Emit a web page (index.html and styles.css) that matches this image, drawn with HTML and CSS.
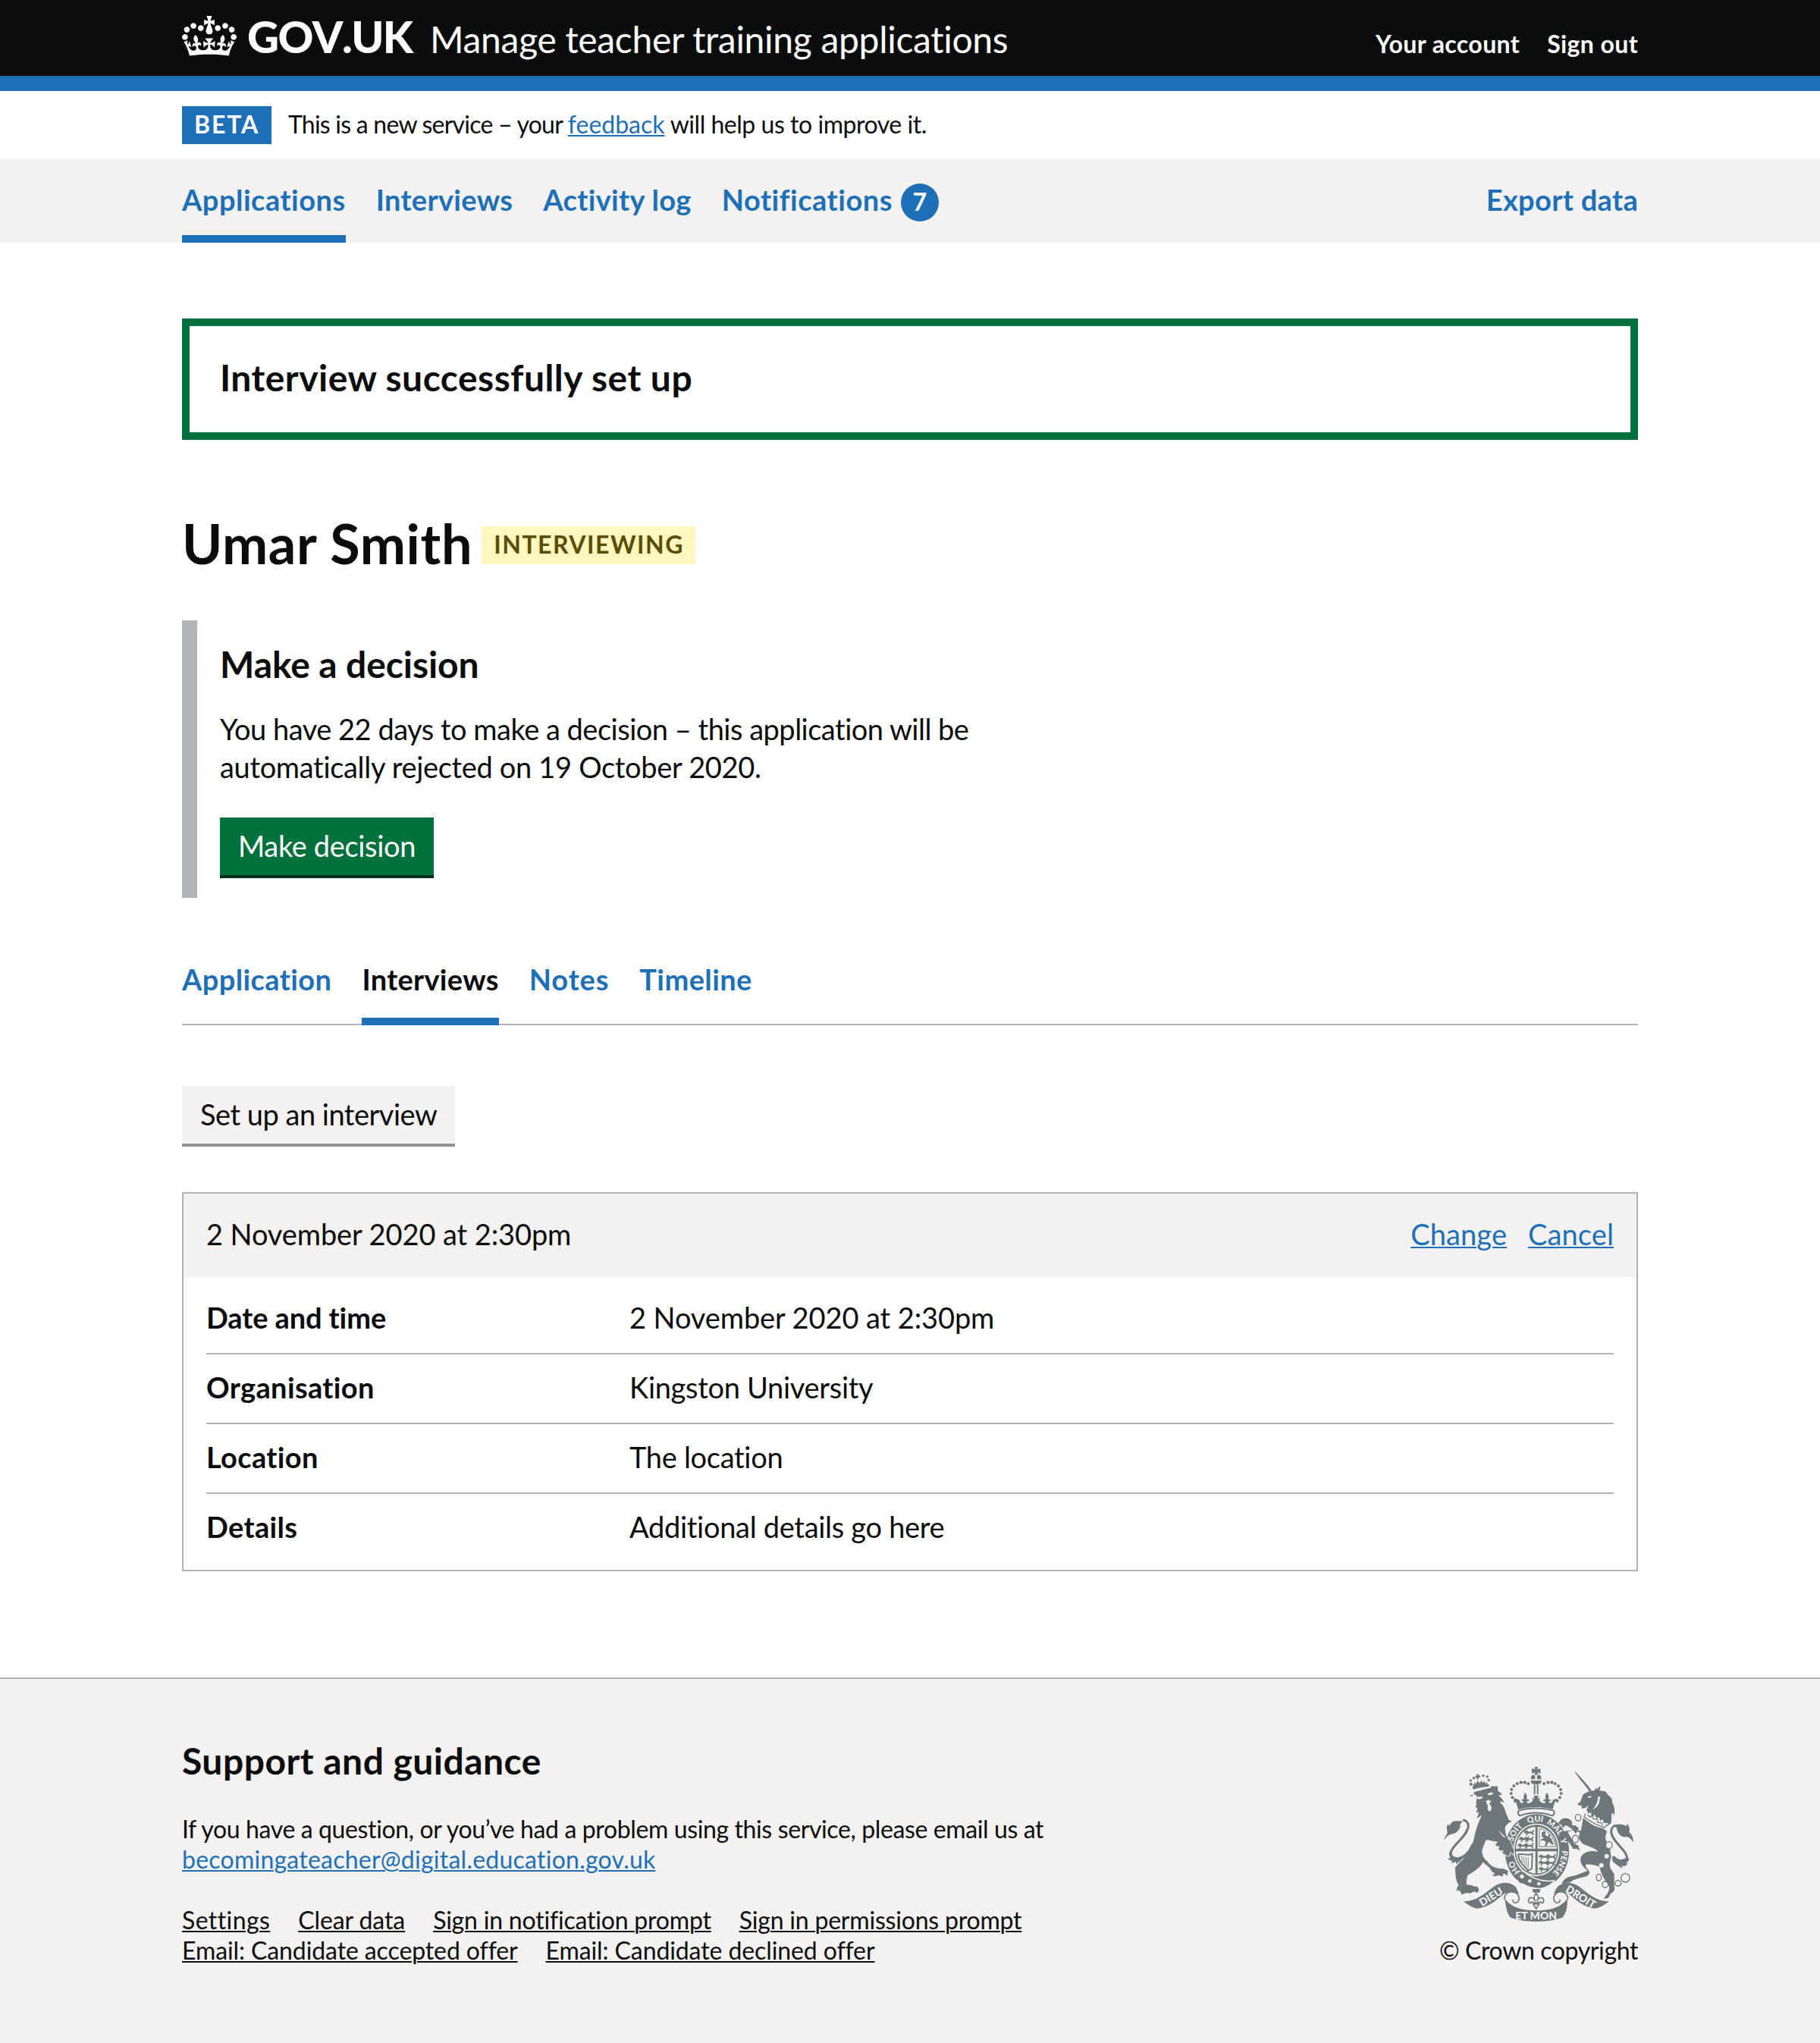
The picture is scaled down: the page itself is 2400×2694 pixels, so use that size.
FILE: index.html
```html
<!DOCTYPE html>
<html lang="en">
<head>
<meta charset="utf-8">
<title>Umar Smith – Interviews – Manage teacher training applications</title>
<link rel="stylesheet" href="styles.css">
</head>
<body>
<header class="header">
  <div class="container header-inner">
    <svg class="crown" viewBox="0 0 132 97" preserveAspectRatio="none" aria-hidden="true"><path fill="currentColor" fill-rule="evenodd" d="M25 30.2c3.5 1.5 7.7-.2 9.1-3.7 1.5-3.6-.2-7.8-3.9-9.2-3.6-1.4-7.6.3-9.1 3.9-1.4 3.5.3 7.5 3.9 9zM9 39.5c3.6 1.5 7.8-.2 9.2-3.7 1.5-3.6-.2-7.8-3.9-9.1-3.6-1.5-7.6.2-9.1 3.8-1.4 3.5.3 7.5 3.8 9zM4.4 57.2c3.5 1.5 7.7-.2 9.1-3.8 1.5-3.6-.2-7.7-3.9-9.1-3.5-1.5-7.6.3-9.1 3.8-1.4 3.5.3 7.6 3.9 9.1zm38.3-21.4c3.5 1.5 7.7-.2 9.1-3.8 1.5-3.6-.2-7.7-3.9-9.1-3.6-1.5-7.6.3-9.1 3.8-1.3 3.6.4 7.7 3.9 9.1zm64.4-5.6c-3.6 1.5-7.8-.2-9.1-3.7-1.5-3.6.2-7.8 3.8-9.2 3.6-1.4 7.7.3 9.2 3.9 1.3 3.5-.4 7.5-3.9 9zm15.9 9.3c-3.6 1.5-7.7-.2-9.1-3.7-1.5-3.6.2-7.8 3.7-9.1 3.6-1.5 7.7.2 9.2 3.8 1.5 3.5-.3 7.5-3.8 9zm4.7 17.7c-3.6 1.5-7.8-.2-9.2-3.8-1.5-3.6.2-7.7 3.9-9.1 3.6-1.5 7.7.3 9.2 3.8 1.3 3.5-.4 7.6-3.9 9.1zM89.3 35.8c-3.6 1.5-7.8-.2-9.2-3.8-1.4-3.6.2-7.7 3.9-9.1 3.6-1.5 7.7.3 9.2 3.8 1.4 3.6-.3 7.7-3.9 9.1zM69.7 17.7l8.9 4.7V9.3l-8.9 2.8c-.2-.3-.5-.6-.9-.9L72.4 0H59.6l3.5 11.2c-.3.3-.6.5-.9.9l-8.8-2.8v13.1l8.8-4.7c.3.3.6.7.9.9l-5 15.4v.1c-.2.8-.4 1.6-.4 2.4 0 4.1 3.1 7.5 7 8.1h.2c.3 0 .7.1 1 .1.4 0 .7 0 1-.1h.2c4-.6 7.1-4.1 7.1-8.1 0-.8-.1-1.7-.4-2.4V34l-5.1-15.4c.4-.2.7-.6 1-.9zM66 92.8c16.9 0 32.8 1.1 47.1 3.2 4-16.9 8.9-26.7 14-33.5l-9.6-3.4c1 4.9 1.1 7.2 0 10.2-1.5-1.4-3-4.3-4.2-8.7L108.6 76c2.8-2 5-3.2 7.5-3.3-4.4 9.4-10 11.9-13.6 11.2-4.3-.8-6.3-4.6-5.6-7.9 1-4.7 5.7-5.9 8-.5 4.3-8.7-3-11.4-7.6-8.8 7.1-7.2 7.9-13.5 2.1-21.1-8 6.1-8.1 12.3-4.5 20.8-4.7-5.4-12.1-2.5-9.5 6.2 3.4-5.2 7.9-2 7.2 3.1-.6 4.3-6.4 7.8-13.5 7.2-10.3-.9-10.9-8-11.2-13.8 2.5-.5 7.1 1.8 11 7.3L80.2 60c-4.1 4.4-8 5.3-12.3 5.4 1.4-4.4 8-11.6 8-11.6H55.5s6.4 7.2 7.9 11.6c-4.2-.1-8-1-12.3-5.4l1.4 16.4c3.9-5.5 8.5-7.7 10.9-7.3-.3 5.8-.9 12.8-11.1 13.8-7.2.6-12.9-2.9-13.5-7.2-.7-5 3.8-8.3 7.1-3.1 2.7-8.7-4.6-11.6-9.4-6.2 3.7-8.5 3.6-14.7-4.6-20.8-5.8 7.6-5 13.9 2.2 21.1-4.7-2.6-11.9.1-7.7 8.8 2.3-5.5 7.1-4.2 8.1.5.7 3.3-1.3 7.1-5.7 7.9-3.5.7-9-1.8-13.5-11.2 2.5.1 4.7 1.3 7.5 3.3l-4.7-15.4c-1.2 4.4-2.7 7.2-4.3 8.7-1.1-3-.9-5.3 0-10.2l-9.5 3.4c5 6.9 9.9 16.7 14 33.5 14.8-2.1 30.8-3.2 47.7-3.2z"/></svg>
    <a class="logotype" href="#">GOV.UK</a>
    <a class="service-name" href="#">Manage teacher training applications</a>
    <nav class="account"><a href="#">Your account</a><a href="#">Sign out</a></nav>
  </div>
</header>

<div class="container phase">
  <strong class="phase-tag">BETA</strong>
  <p class="phase-text">This is a new service – your <a class="link" href="#">feedback</a><span class="phase-rest"> will help us to improve it.</span></p>
</div>

<nav class="primary">
  <ul class="container primary-list">
    <li class="primary-item current"><a href="#">Applications</a></li>
    <li class="primary-item"><a href="#">Interviews</a></li>
    <li class="primary-item"><a href="#">Activity log</a></li>
    <li class="primary-item counted"><a href="#">Notifications</a><span class="count">7</span></li>
    <li class="primary-item end"><a href="#">Export data</a></li>
  </ul>
</nav>

<main class="container">
  <div class="notification"><h2 class="heading">Interview successfully set up</h2></div>

  <div class="title-row">
    <h1 class="title">Umar Smith</h1>
    <strong class="status-tag">INTERVIEWING</strong>
  </div>

  <section class="inset">
    <h2 class="heading decision-heading">Make a decision</h2>
    <p class="inset-text">You have 22 days to make a decision – this application will be<br><span class="inset-line">automatically rejected on 19 October 2020.</span></p>
    <a class="button decision-button" href="#">Make decision</a>
  </section>

  <ul class="subnav">
    <li class="subnav-item"><a href="#">Application</a></li>
    <li class="subnav-item current"><a href="#">Interviews</a></li>
    <li class="subnav-item notes"><a href="#">Notes</a></li>
    <li class="subnav-item"><a href="#">Timeline</a></li>
  </ul>

  <a class="button secondary" href="#">Set up an interview</a>

  <section class="card">
    <div class="card-header">
      <span class="date">2 November 2020 at 2:30pm</span>
      <span class="card-actions"><a class="link" href="#">Change</a><a class="link" href="#">Cancel</a></span>
    </div>
    <dl class="summary">
      <div class="row"><dt class="tight">Date and time</dt><dd class="date">2 November 2020 at 2:30pm</dd></div>
      <div class="row"><dt>Organisation</dt><dd>Kingston University</dd></div>
      <div class="row"><dt>Location</dt><dd>The location</dd></div>
      <div class="row"><dt>Details</dt><dd>Additional details go here</dd></div>
    </dl>
  </section>
</main>

<footer class="footer">
  <div class="container footer-inner">
    <div class="footer-main">
      <h2 class="heading">Support and guidance</h2>
      <p class="footer-text">If you have a question, or you’ve had a problem using this service, please email us at<br><a class="link email" href="#">becomingateacher@digital.education.gov.uk</a></p>
      <ul class="footer-links">
        <li class="loose"><a href="#">Settings</a></li>
        <li><a href="#">Clear data</a></li>
        <li class="tight"><a href="#">Sign in notification prompt</a></li>
        <li class="tight"><a href="#">Sign in permissions prompt</a></li>
        <li><a href="#">Email: Candidate accepted offer</a></li>
        <li><a href="#">Email: Candidate declined offer</a></li>
      </ul>
    </div>
    <div class="copyright">
      <svg class="crest" viewBox="72 60 750 612" aria-hidden="true">
        <defs>
          <path id="garter" d="M440 503C386 503 341 452 341 389C341 326 386 276 440 276C494 276 539 326 539 389C539 452 494 503 440 503Z"/>
          <g id="passant"><path d="M0 6l7-6 6 2 3 4h14l6-8 4 2-5 9 3 9-5 2-4-7H14l-3 8-6-1 4-8-5-1-4 4z"/></g>
        </defs>
        <g fill="currentColor">
          <!-- royal crown -->
          <path d="M430 60h15l-4 10 13-4v20l-13-5 4 10h-15l4-10-14 5V66l14 4z"/>
          <path d="M421 92h12v17h-16c-1-7 0-13 4-17zM441 92h12c4 5 5 10 4 17h-16zM415 114h44c0 9-8 14-14 16h-16c-6-2-14-8-14-16zM428 132h6v36h-6zM440 132h6v36h-6z"/>
          <g>
            <circle cx="353" cy="194" r="6"/><circle cx="343" cy="181" r="6"/><circle cx="338" cy="165" r="6"/><circle cx="340" cy="149" r="6"/><circle cx="349" cy="135" r="6"/><circle cx="362" cy="126" r="6"/><circle cx="377" cy="121" r="6.500"/><circle cx="392" cy="121" r="6.500"/><circle cx="406" cy="126" r="6"/>
            <circle cx="521" cy="194" r="6"/><circle cx="531" cy="181" r="6"/><circle cx="536" cy="165" r="6"/><circle cx="534" cy="149" r="6"/><circle cx="525" cy="135" r="6"/><circle cx="512" cy="126" r="6"/><circle cx="499" cy="121" r="6.500"/><circle cx="484" cy="121" r="6.500"/><circle cx="468" cy="126" r="6"/>
          </g>
          <path d="M352 184l18 6c2 7 5 12 10 13 7 0 8-6 4-9-4-2-5 2-5 2-1-8 5-11 10-7-3-12-1-19 5-27 7 8 8 15 5 27 6-4 11 0 9 8-2-3-7-3-8 2 0 5 9 6 15 2 4-2 7-6 10-8l-4-12 8 5c2-4-1-10-3-13h22c-3 3-5 9-4 13l9-5-4 12c3 2 6 6 10 8 6 4 15 3 15-2-1-5-6-5-8-2-2-8 3-12 9-8-3-12-2-19 5-27 6 8 8 15 5 27 5-4 11-1 10 7 0 0-1-4-5-2-4 3-3 9 4 9 5-1 8-6 10-13l18-6c-10 12-15 25-20 44-43-12-93-12-136 0-5-19-10-32-19-44z"/>
          <path fill="none" stroke="currentColor" stroke-width="6" d="M370 232c40-11 94-11 134 0 8 3 5 17-3 21-38-15-90-15-128 0-8-4-11-18-3-21z"/>
          <!-- garter and shield -->
          <path fill-rule="evenodd" d="M440 247c-70 0-126 62-126 145s56 146 126 146 127-63 127-146-57-145-127-145zm-2 37c52 0 91 46 91 104s-39 104-91 104-91-46-91-104 39-104 91-104z"/>
          <path fill-rule="evenodd" d="M438 289c-49 0-86 44-86 99s37 99 86 99 86-44 86-99-37-99-86-99zm-4 8v86h-77c2-46 32-82 77-86zm9 0c44 4 74 40 76 86h-76zm-86 97h77v88c-44-4-75-42-77-88zm86 0h76c-2 46-32 84-76 88z"/>
          <use href="#passant" x="390" y="310"/><use href="#passant" x="370" y="336"/><use href="#passant" x="388" y="336"/><use href="#passant" x="364" y="362"/><use href="#passant" x="388" y="362"/>
          <use href="#passant" x="448" y="406"/><use href="#passant" x="476" y="406"/><use href="#passant" x="448" y="430"/><use href="#passant" x="474" y="430"/><use href="#passant" x="448" y="455"/>
          <path fill="none" stroke="currentColor" stroke-width="3" d="M450 304v71h64c-3-34-28-65-64-71z"/>
          <path d="M459 318l10-4 6 6-3 8 12 8 3-10 6-2-2 14 8 8 3 12 6 6-9 4-8-10-8 2-4 12-8 2 4-16-8-8-12 2 2-6 10-4-8-8z"/>
          <path fill="none" stroke="currentColor" stroke-width="6" d="M366 406c18-6 34 8 56-2l-2 58-14 8c-10-16-38-28-40-64z"/>
          <path fill="none" stroke="currentColor" stroke-width="2.500" d="M378 412l6 26M387 414l6 34M396 416l5 40M405 416l3 44"/>
          <!-- strap and buckle -->
          <path stroke="#f3f2f1" stroke-width="5" d="M366 482c8-12 26-12 32 0 40 28 80 32 110 28l-4 8c-20 16-44 26-68 22-34-4-50-14-70-30z"/>
          <path fill="none" stroke="currentColor" stroke-width="6" d="M383 475c-12 2-18 8-18 18s4 22 18 26"/>
          <!-- pendant -->
          <path d="M422 543h32l-3 14h-26z"/>
          <path fill="none" stroke="currentColor" stroke-width="5" d="M437 560c-12 12-8 22-3 32-6-20-26-18-27-4 0 10 8 14 12 6l18 5 18-5c4 8 12 4 12-6-1-14-21-16-27 4 5-10 9-20-3-32zM425 602h24l-12 19z"/>
          <!-- lion -->
          <path stroke="#f3f2f1" stroke-width="3" d="M172 178l14 0 2-18c24-14 46-22 72-25l27 0 0 20c10 4 17 10 17 18-7-2-11-2-14 0 12 10 20 20 23 32-8-6-14-8-19-6 12 10 20 22 22 34l14 36 16 4c-14 8-24 12-31 26l4 32c12 10 22 28 26 48 8 10 8 22-2 30 0-7-4-11-8-11l-2 14-12 2c-2-6-5-8-10-7l-10-8 6-8-14 2-6-10 4-8-12 0-4-10 8-8-18-2c-8-4-16-5-26-4l-14 36c-2 20 6 36 20 46 12 20 34 28 62 28 12 4 20 8 25 18l-7-2c2 6 0 12-4 17-2-8-8-11-14-9l-2 14c-5-8-13-10-24-7-8 2-14 2-18-2 2-4 6-7 10-8l-14-8c-4-18-20-24-32-36-6 14-24 28-38 38l-22 14c-2 12-6 20-4 34 10 2 20 0 28 8 12-4 18 4 20 12 2 6-4 12-8 16-4-6-10-6-16-4l-10 6c-12-4-24-2-36 6 0-8-4-16-12-20l-6 8c-2-10-2-20 6-28-6-10-12-24-12-40l-2-30 20-24c24-12 30-50 52-78 8-40 14-62 32-102-8 6-14 10-20 10 6-10 9-18 9-24l-12 2c6-8 8-14 6-20l-8-2c6-8 6-14 4-20l4-24c-6-3-12-8-13-14z"/>
          <path fill="none" stroke="currentColor" stroke-width="9" d="M170 394c-14 20-34 28-52 30-18-4-24-22-12-40 16-26 56-52 63-88 0-16-10-26-22-26"/>
          <path d="M72 350c4-16 14-22 14-34-4-12-4-22 3-30l6 8c2-10 10-18 22-20h30c-10 10-12 16-10 24-8 18-22 28-38 28-10 4-18 10-27 24zM96 392l12 20c16 10 34 10 52-2-14 14-24 22-40 34l0-9-18 6 4-10c-8 0-14-3-18-9l11-2c-7-8-8-18-3-28z"/>
          <path d="M189 150l-5-12 6-2-5-8 8 2 1-12 6 9 6-14 8 12 6-13 5 12 7-9 3 11 8-7 1 11 7-2-2 12c-20-2-44 2-60 10z"/>
          <circle cx="179" cy="128" r="6"/><circle cx="178" cy="114" r="5"/><circle cx="190" cy="104" r="5"/><circle cx="250" cy="112" r="5"/><circle cx="244" cy="99" r="5"/><circle cx="228" cy="95" r="5"/>
          <path d="M202 88h7v6h7v7h-7v8h-7v-7h-6v-7h6z"/>
          <!-- unicorn -->
          <path d="M588 75c16 16 50 52 68 77l-8 5c-16-24-50-60-60-82zM600 206l12-8 10-28c14-12 30-16 46-18l8-12 0 10 14-14c2 8 0 14-4 18 24-2 34 8 34 16 14 8 20 18 18 32 8 10 12 30 8 50-4-8-6-10-10-10l-2 40-20 14-24-12c-26-8-44-26-58-42l12-30-12 10-14 2-2-14-6 4z"/>
          <path d="M624 256c14 22 40 40 80 48l14 12c-14 24-4 40 10 60l6 40c-6 20-10 38 2 52l10 16 0 48 2 12c-4 10-10 14-16 17l-10 18-18 2 16-22c8-14 8-24 2-36-20-22-28-42-34-68-18-8-38-10-52-10-6 4-2 14 8 22 8 10 4 24-16 28-28 6-44 10-56 22l-34 4c6-14 20-26 38-28 22-4 44-16 66-22-22-16-34-34-28-54 10-22 38-28 68-22-14-14-32-20-56-28-20-16-24-28-16-46-16-12-34-10-48-4l10 18c6 10 10 16 12 26l20 10 6 20-14-8-12 2-14-22c-8-12-20-24-34-32 4-10 12-18 24-18 18-4 38-4 54 0z"/>
          <path d="M534 270c10-10 28-10 40 0l10 16 22 16-12 22c-10-16-24-28-42-34l-8 12-8-14-12-4z"/>
          <path fill="none" stroke="currentColor" stroke-width="9" d="M742 414c20 20 46 30 54 14 8-36-58-68-62-110 0-18 10-26 20-26"/>
          <path d="M744 290c20-6 40-4 48 4l7-8c10 14 8 24 6 32 12 10 16 20 17 42-8-16-18-22-28-24-20 4-36-12-38-34zM738 412c14 14 38 20 58 6l10 6c-4 10-10 14-14 18l10 0-14 10-12 0 0 10c-14-14-24-12-38-32z"/>
          <!-- ribbons -->
          <path d="M150 592c50 0 84-32 122-60 26-18 56-18 76-4 12 8 16 22 20 36-18-10-40-12-58-2-36 32-68 54-104 58-22-2-38-14-56-28zM725 592c-50 0-84-32-120-60-26-18-56-18-76-4-12 8-18 20-21 36 20-12 40-12 58-2 34 32 68 54 102 58 22-2 39-14 57-28zM312 580c26 36 66 48 125 48s98-12 125-48l-4 40c-4 14-8 26-18 36-34 12-70 15-103 15s-68-3-100-15c-12-12-14-24-18-38z"/>
          <path fill="none" stroke="currentColor" stroke-width="5" d="M312 584c-2-26 22-34 40-28 20 8 22 32 10 40-12 4-18-2-18-12M562 584c2-26-22-34-38-28-20 8-22 32-10 40 12 4 18-2 18-12"/>
        </g>
        <g fill="#f3f2f1">
          <path d="M200 182c8-6 18-6 27-3-6 9-17 11-27 3zM244 168c6-6 14-8 24-5-4 8-14 12-24 5zM238 196l10-6 12 6-8 8 8 14c2 10-2 16-8 18-6-4-8-10-6-22zM640 180l10-6 8 4-12 4zM188 150l70-15 1 7-66 17zM622 240l16-8 6 14 8-8 8 20 8-10 8 16 10-6 4 14 12-4 2 14 18 0-14 22c-30-6-62-22-84-42zM690 176c-2 30-10 44-30 52 16-16 20-30 22-50zM286 308l34 34-16-8z"/>
          <circle cx="716" cy="413" r="9"/><circle cx="695" cy="449" r="9"/><circle cx="585" cy="285" r="7"/><circle cx="412" cy="511" r="7"/><circle cx="448" cy="522" r="7"/><circle cx="381" cy="493" r="8"/>
        </g>
        <g fill="none" stroke="currentColor" stroke-width="4">
          <path d="M632 244l-4 14c26 20 52 34 80 42l8-12M640 250l12 8 6-8 6 16 14 0 4 14 14 0 4 12"/>
          <ellipse cx="603" cy="260" rx="11" ry="13"/><ellipse class="link-ring" cx="592" cy="345" rx="12" ry="15"/><ellipse cx="685" cy="497" rx="10" ry="13"/><circle cx="710" cy="525" r="12"/><ellipse cx="761" cy="520" rx="12" ry="11"/><circle cx="790" cy="499" r="17"/><ellipse class="link-ring" cx="725" cy="369" rx="13" ry="14"/>
        </g>
        <g class="motto">
          <text class="garter-text"><textPath href="#garter" startOffset="15%">HO</textPath></text>
          <text class="garter-text"><textPath href="#garter" startOffset="35.500%">SOIT</textPath></text>
          <text class="garter-text"><textPath href="#garter" startOffset="49%">QUI</textPath></text>
          <text class="garter-text"><textPath href="#garter" startOffset="61%">MAL</textPath></text>
          <text class="garter-text"><textPath href="#garter" startOffset="70%">Y</textPath></text>
          <text class="garter-text"><textPath href="#garter" startOffset="82.500%">PENSE</textPath></text>
          <text class="ribbon-text" transform="translate(266 586) rotate(-32)">DIEU</text>
          <text class="ribbon-text" transform="translate(606 586) rotate(32)">DROIT</text>
          <text class="ribbon-text" x="437" y="662">ET MON</text>
        </g>
      </svg>
      <a class="copyright-text" href="#">© Crown copyright</a>
    </div>
  </div>
</footer>
</body>
</html>
```
FILE: styles.css
```css
:root {
  --black: #0b0c0c;
  --blue: #1d70b8;
  --green: #00703c;
  --grey: #b1b4b6;
  --light: #f3f2f1;
}

* { box-sizing: border-box; }

body {
  margin: 0;
  background: #fff;
  color: var(--black);
  font: 38px/50px Lato, "Open Sans", sans-serif;
  letter-spacing: -0.35px;
  font-variant-ligatures: none;
}

h1, h2, p, ul, dl, dd { margin: 0; padding: 0; }
ul { list-style: none; }
a { color: inherit; text-decoration: none; }

.container { width: 1920px; margin: 0 auto; }

.link {
  color: var(--blue);
  text-decoration: underline 2px;
  text-underline-offset: 2px;
}

.heading {
  font-size: 48px;
  line-height: 59px;
  font-weight: 700;
  letter-spacing: 0.47px;
}

/* Header */
.header {
  height: 120px;
  background: var(--black);
  border-bottom: 20px solid var(--blue);
  color: #fff;
}
.header-inner {
  display: flex;
  align-items: baseline;
  padding-top: 18px;
}
.crown {
  align-self: flex-start;
  width: 72px;
  height: 53px;
  margin-top: 3px;
}
.logotype {
  margin-left: 14px;
  font-size: 58px;
  line-height: 59px;
  font-weight: 900;
  letter-spacing: -1.6px;
  font-kerning: none;
  width: 219px;
}
.service-name {
  margin-left: 22px;
  font-size: 48px;
  line-height: 59px;
  letter-spacing: -0.3px;
}
.account {
  display: flex;
  gap: 36px;
  margin-left: auto;
  font-size: 32px;
  line-height: 40px;
  font-weight: 700;
  letter-spacing: 0.4px;
}

/* Phase banner */
.phase {
  display: flex;
  align-items: flex-start;
  height: 90px;
  padding-top: 20px;
  font-size: 32px;
  line-height: 47px;
}
.phase-tag {
  width: 118px;
  height: 50px;
  padding-left: 16px;
  background: var(--blue);
  color: #fff;
  letter-spacing: 1.9px;
}
.phase-text { margin-left: 22px; letter-spacing: -0.77px; }
.phase-text .link { letter-spacing: 0; }
.phase-rest { letter-spacing: -0.46px; }

/* Primary navigation */
.primary { background: var(--light); }
.primary-list {
  display: flex;
  gap: 40px;
  color: var(--blue);
  font-weight: 700;
  letter-spacing: 0.33px;
}
.primary-item {
  display: flex;
  align-items: flex-start;
  height: 110px;
  padding-top: 28px;
}
.primary-item.current {
  border-bottom: 10px solid var(--blue);
  letter-spacing: 0.5px;
}
.primary-item.counted { letter-spacing: 0.55px; }
.primary-item.end { margin-left: auto; }
.count {
  width: 50px;
  height: 50px;
  margin: 4px 0 0 11px;
  border-radius: 50%;
  background: var(--blue);
  color: #fff;
  font-size: 32px;
  line-height: 47px;
  text-align: center;
}

/* Success message */
.notification {
  height: 160px;
  margin-top: 100px;
  padding: 38px 40px 0;
  border: 10px solid var(--green);
}

/* Page title */
.title-row { display: flex; align-items: flex-start; margin-top: 96px; }
.title { font-size: 72px; line-height: 80px; letter-spacing: 0.65px; }
.status-tag {
  width: 282px;
  height: 50px;
  margin: 18px 0 0 12px;
  padding-left: 16px;
  background: #fff7bf;
  color: #594d00;
  font-size: 32px;
  line-height: 47px;
  letter-spacing: 1.5px;
}

/* Decision inset */
.inset {
  height: 366px;
  margin-top: 62px;
  padding: 28px 0 0 30px;
  border-left: 20px solid var(--grey);
}
.decision-heading { letter-spacing: -0.1px; }
.inset-text { margin-top: 31px; letter-spacing: -0.5px; }
.inset-line { letter-spacing: -0.32px; }

.button {
  display: block;
  height: 76px;
  padding: 12px 0 0 24px;
}
.decision-button {
  width: 282px;
  margin-top: 42px;
  background: var(--green);
  box-shadow: 0 4px 0 #002d18;
  color: #fff;
}
.secondary {
  width: 360px;
  margin-top: 80px;
  background: var(--light);
  box-shadow: 0 4px 0 #929191;
  letter-spacing: -0.5px;
}

/* Section tabs */
.subnav {
  display: flex;
  gap: 40px;
  margin-top: 82px;
  box-shadow: inset 0 -2px 0 var(--grey);
  color: var(--blue);
  font-weight: 700;
  letter-spacing: 0.4px;
}
.subnav-item { height: 86px; }
.subnav-item.current {
  border-bottom: 10px solid var(--blue);
  color: var(--black);
  letter-spacing: 0.3px;
}
.subnav-item.notes { letter-spacing: 0.9px; }

/* Interview card */
.card { margin-top: 64px; border: 2px solid var(--grey); }
.card-header {
  display: flex;
  justify-content: space-between;
  height: 110px;
  padding: 28px 30px 0;
  background: var(--light);
}
.card-actions { display: flex; gap: 28px; letter-spacing: 0.1px; }
.date { letter-spacing: -0.1px; }
.summary { padding: 10px 30px; }
.row {
  display: grid;
  grid-template-columns: 558px 1fr;
  height: 92px;
  padding-top: 18px;
  border-bottom: 2px solid var(--grey);
}
.row:last-child { height: 90px; border-bottom: 0; }
.row dt { font-weight: 700; letter-spacing: 0.35px; }
.row dt.tight { letter-spacing: -0.1px; }
.row dd:not(.date) { letter-spacing: -0.3px; }

/* Footer */
.footer {
  height: 482px;
  margin-top: 140px;
  padding-top: 78px;
  border-top: 2px solid var(--grey);
  background: var(--light);
  font-size: 32px;
  line-height: 40px;
}
.footer-inner { display: flex; justify-content: space-between; }
.footer-main { width: 1200px; }
.footer-text { margin-top: 41px; letter-spacing: -0.38px; }
.footer-text .email { letter-spacing: 0.24px; }
.footer-links {
  display: flex;
  flex-wrap: wrap;
  column-gap: 37px;
  margin-top: 40px;
  letter-spacing: -0.1px;
}
.footer-links a {
  text-decoration: underline 2px;
  text-underline-offset: 2px;
}
.footer-links .loose { letter-spacing: 0.4px; }
.footer-links .tight { letter-spacing: -0.2px; }
.copyright {
  display: flex;
  flex-direction: column;
  align-items: flex-end;
  padding-top: 38px;
}
.crest { width: 250px; height: 204px; margin-right: 6px; color: #6e787b; }
.copyright-text { margin-top: 18px; letter-spacing: -0.38px; }

.motto { fill: var(--light); font-family: Lato, sans-serif; text-anchor: middle; }
.garter-text { font-size: 32px; font-weight: 900; letter-spacing: 0; }
.ribbon-text { font-size: 42px; font-weight: 900; letter-spacing: 0; }
.link-ring { fill: var(--light); }
```
